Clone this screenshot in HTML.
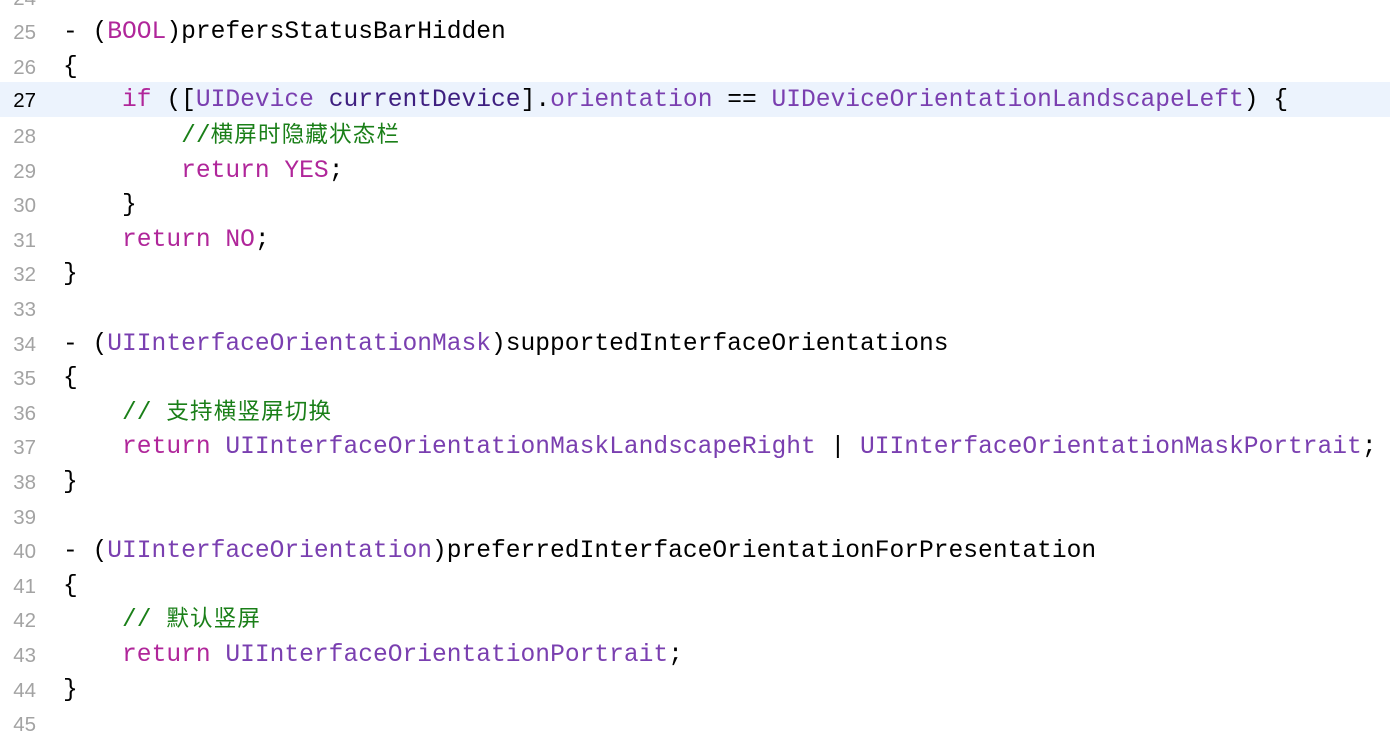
<!DOCTYPE html>
<html><head><meta charset="utf-8"><style>
body{margin:0;width:1390px;height:716px;overflow:hidden;background:#fff;position:relative}
.l{position:absolute;left:0;width:1390px;height:34.6px;line-height:34.6px;white-space:pre;font-family:"Liberation Mono","Noto Sans CJK SC",monospace;font-size:24.6px;color:#000;margin-top:1.5px}
.n{position:absolute;left:0;width:36px;text-align:right;font-family:"Liberation Sans",sans-serif;font-size:20.5px;color:#a3a3a3}
.c{position:absolute;left:63px}
.k{color:#b0269a}.t{color:#7a3fb0}.m{color:#3e1f80}.g{color:#1a7f18}
.z{font-family:"Noto Sans CJK SC",sans-serif;font-size:22.5px;letter-spacing:1.2px;line-height:1}
.hl{background:#ecf3fd}
</style></head><body>
<div class="l" style="top:-19.9px"><span class="n">24</span></div>
<div class="l" style="top:14.7px"><span class="n">25</span><span class="c">- (<span class="k">BOOL</span>)prefersStatusBarHidden</span></div>
<div class="l" style="top:49.3px"><span class="n">26</span><span class="c">{</span></div>
<div class="l hl" style="top:82.4px;margin-top:0;padding-top:1.5px;height:33.1px;line-height:33.1px"><span class="n" style="color:#000">27</span><span class="c">    <span class="k">if</span> ([<span class="t">UIDevice</span> <span class="m">currentDevice</span>].<span class="t">orientation</span> == <span class="t">UIDeviceOrientationLandscapeLeft</span>) {</span></div>
<div class="l" style="top:118.5px"><span class="n">28</span><span class="c g">        //<span class="z">横屏时隐藏状态栏</span></span></div>
<div class="l" style="top:153.1px"><span class="n">29</span><span class="c">        <span class="k">return</span> <span class="k">YES</span>;</span></div>
<div class="l" style="top:187.7px"><span class="n">30</span><span class="c">    }</span></div>
<div class="l" style="top:222.3px"><span class="n">31</span><span class="c">    <span class="k">return</span> <span class="k">NO</span>;</span></div>
<div class="l" style="top:256.9px"><span class="n">32</span><span class="c">}</span></div>
<div class="l" style="top:291.5px"><span class="n">33</span></div>
<div class="l" style="top:326.1px"><span class="n">34</span><span class="c">- (<span class="t">UIInterfaceOrientationMask</span>)supportedInterfaceOrientations</span></div>
<div class="l" style="top:360.7px"><span class="n">35</span><span class="c">{</span></div>
<div class="l" style="top:395.3px"><span class="n">36</span><span class="c g">    // <span class="z">支持横竖屏切换</span></span></div>
<div class="l" style="top:429.9px"><span class="n">37</span><span class="c">    <span class="k">return</span> <span class="t">UIInterfaceOrientationMaskLandscapeRight</span> | <span class="t">UIInterfaceOrientationMaskPortrait</span>;</span></div>
<div class="l" style="top:464.5px"><span class="n">38</span><span class="c">}</span></div>
<div class="l" style="top:499.1px"><span class="n">39</span></div>
<div class="l" style="top:533.7px"><span class="n">40</span><span class="c">- (<span class="t">UIInterfaceOrientation</span>)preferredInterfaceOrientationForPresentation</span></div>
<div class="l" style="top:568.3px"><span class="n">41</span><span class="c">{</span></div>
<div class="l" style="top:602.9px"><span class="n">42</span><span class="c g">    // <span class="z">默认竖屏</span></span></div>
<div class="l" style="top:637.5px"><span class="n">43</span><span class="c">    <span class="k">return</span> <span class="t">UIInterfaceOrientationPortrait</span>;</span></div>
<div class="l" style="top:672.1px"><span class="n">44</span><span class="c">}</span></div>
<div class="l" style="top:706.7px"><span class="n">45</span></div>
</body></html>
